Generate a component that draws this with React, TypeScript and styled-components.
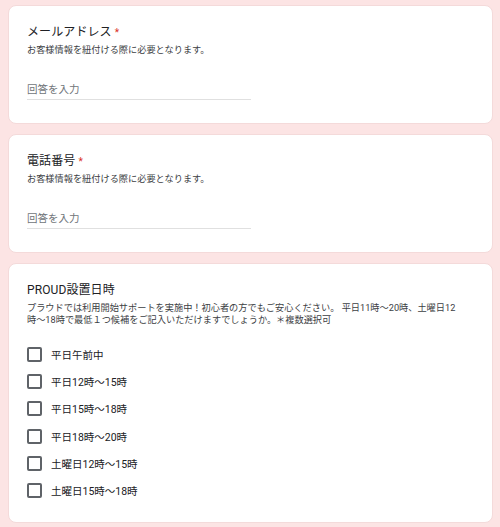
import { createGlobalStyle, styled } from "styled-components";

const GlobalStyle = createGlobalStyle`
  html, body {
    margin: 0;
    padding: 0;
    background: #fce4e4;
  }
  body {
    font-family: Roboto, "Noto Sans CJK JP", sans-serif;
    color: #202124;
  }
`;

// Layout
const Page = styled.div`
  display: flex;
  flex-direction: column;
  gap: 10px;
  width: 485px;
  padding: 5px 7px 5px 8px;
`;

const Card = styled.section`
  background: #fff;
  border-radius: 8px;
  border: 1px solid #f4dada;
  padding: 17px 18px 18px;
`;

const Title = styled.div`
  font-size: 12px;
  line-height: 18px;
  height: 18px;
  color: #202124;
  letter-spacing: 0.1px;
`;

const Required = styled.span`
  color: #d93025;
  margin-left: 3px;
  font-size: 10px;
`;

const Description = styled.div<{ $maxWidth?: number }>`
  margin-top: 3px;
  font-size: 9.2px;
  line-height: 12px;
  color: #3c4043;
  max-width: ${(p) => (p.$maxWidth ? `${p.$maxWidth}px` : "none")};
`;

const Field = styled.div`
  margin-top: 26px;
  width: 50%;
  border-bottom: 1px solid #e0e0e0;
  padding-bottom: 1px;
  margin-bottom: 5px;
`;

const Placeholder = styled.div`
  font-size: 10.5px;
  line-height: 16px;
  color: #70757a;
`;

const Options = styled.div`
  display: flex;
  flex-direction: column;
  margin-top: 15px;
`;

const Option = styled.label`
  display: flex;
  align-items: center;
  gap: 9px;
  height: 27.2px;
  font-size: 10.5px;
  color: #202124;
`;

const Box = styled.span`
  box-sizing: border-box;
  width: 15px;
  height: 15px;
  border: 2px solid #5f6368;
  border-radius: 2px;
  flex-shrink: 0;
`;

const times = [
  "平日午前中",
  "平日12時〜15時",
  "平日15時〜18時",
  "平日18時〜20時",
  "土曜日12時〜15時",
  "土曜日15時〜18時",
];

function TextQuestion({ title }: { title: string }) {
  return (
    <Card>
      <Title>
        {title}
        <Required>*</Required>
      </Title>
      <Description>お客様情報を紐付ける際に必要となります。</Description>
      <Field>
        <Placeholder>回答を入力</Placeholder>
      </Field>
    </Card>
  );
}

export default function App() {
  return (
    <>
      <GlobalStyle />
      <Page>
        <TextQuestion title="メールアドレス" />
        <TextQuestion title="電話番号" />
        <Card>
          <Title>PROUD設置日時</Title>
          <Description $maxWidth={432}>
            プラウドでは利用開始サポートを実施中！初心者の方でもご安心ください。 平日11時〜20時、土曜日12時〜18時で最低１つ候補をご記入いただけますでしょうか。＊複数選択可
          </Description>
          <Options>
            {times.map((t) => (
              <Option key={t}>
                <Box />
                {t}
              </Option>
            ))}
          </Options>
        </Card>
      </Page>
    </>
  );
}
